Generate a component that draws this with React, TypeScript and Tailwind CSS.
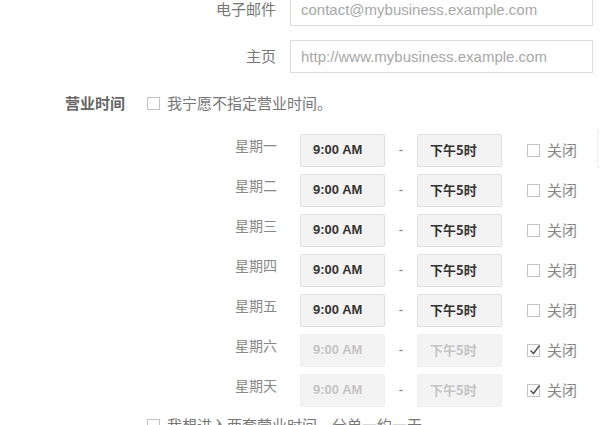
const cjk = { fontFamily: '"Noto Sans CJK SC", "Noto Sans", sans-serif' };
const latin = { fontFamily: '"Liberation Sans", Arial, "Noto Sans CJK SC", sans-serif' };

const days = [
  { name: '星期一', closed: false },
  { name: '星期二', closed: false },
  { name: '星期三', closed: false },
  { name: '星期四', closed: false },
  { name: '星期五', closed: false },
  { name: '星期六', closed: true },
  { name: '星期天', closed: true },
];

function Checkbox({ checked = false }: { checked?: boolean }) {
  return (
    <span className="relative inline-block w-[13px] h-[13px] border border-[#c4c4c4] bg-white shrink-0">
      {checked && (
        <svg viewBox="0 0 14 14" className="absolute left-[0px] top-[-2px] w-[14px] h-[14px]">
          <path d="M2.5 7.5 L5.5 10.5 L11.5 2.5" fill="none" stroke="#555" strokeWidth="1.5" />
        </svg>
      )}
    </span>
  );
}

function TextRow({ label, value }: { label: string; value: string }) {
  return (
    <div className="flex items-center h-[33px]">
      <div className="w-[276px] text-right text-[15px] text-[#777]" style={cjk}>
        {label}
      </div>
      <div
        className="ml-[14px] w-[303px] h-[33px] border border-[#dcdcdc] bg-white flex items-center pl-[10px] pt-[2px] text-[15px] text-[#a8a8a8]"
        style={latin}
      >
        {value}
      </div>
    </div>
  );
}

function TimeBox({ text, disabled, cjkText }: { text: string; disabled: boolean; cjkText?: boolean }) {
  return (
    <div
      className={`w-[85px] h-[33px] rounded-[2px] border bg-[#f3f3f3] flex items-center pl-[12px] text-[13px] font-bold ${
        disabled ? 'text-[#c4c4c4] border-[#efefef]' : 'text-[#333] border-[#e0e0e0]'
      }`}
      style={cjkText ? cjk : latin}
    >
      {text}
    </div>
  );
}

export default function App() {
  return (
    <div className="relative w-[600px] h-[425px] overflow-hidden bg-white">
      <div className="mt-[-7px]">
        <TextRow label="电子邮件" value="contact@mybusiness.example.com" />
        <div className="mt-[14px]">
          <TextRow label="主页" value="http://www.mybusiness.example.com" />
        </div>

        <div className="mt-[15px] h-[30px] flex items-center" style={cjk}>
          <div className="ml-[65px] w-[62px] text-[15px] font-bold text-[#666] whitespace-nowrap">营业时间</div>
          <div className="ml-[20px] flex items-center gap-[7px] text-[15px] text-[#777]">
            <Checkbox />
            <span>我宁愿不指定营业时间。</span>
          </div>
        </div>

        <div className="mt-[12px]">
          {days.map((d) => (
            <div key={d.name} className="h-[40px] flex items-center">
              <div className="w-[277px] text-right text-[14px] text-[#888] -mt-[10px]" style={cjk}>
                {d.name}
              </div>
              <div className="ml-[23px]">
                <TimeBox text="9:00 AM" disabled={d.closed} />
              </div>
              <div className="w-[32px] text-center text-[13px] text-[#777]" style={latin}>
                -
              </div>
              <TimeBox text="下午5时" disabled={d.closed} cjkText />
              <div className="ml-[25px] flex items-center gap-[7px] text-[15px] text-[#888]" style={cjk}>
                <Checkbox checked={d.closed} />
                <span>关闭</span>
              </div>
            </div>
          ))}
        </div>

        <div className="h-[30px] flex items-center" style={cjk}>
          <div className="ml-[147px] flex items-center gap-[7px] text-[15px] text-[#777]">
            <Checkbox />
            <span>我想进入两套营业时间，分单一约一天</span>
          </div>
        </div>
      </div>

      <div className="absolute left-[597px] top-[130px] w-[10px] h-[38px] border border-[#eeeeee] bg-white" />
    </div>
  );
}
